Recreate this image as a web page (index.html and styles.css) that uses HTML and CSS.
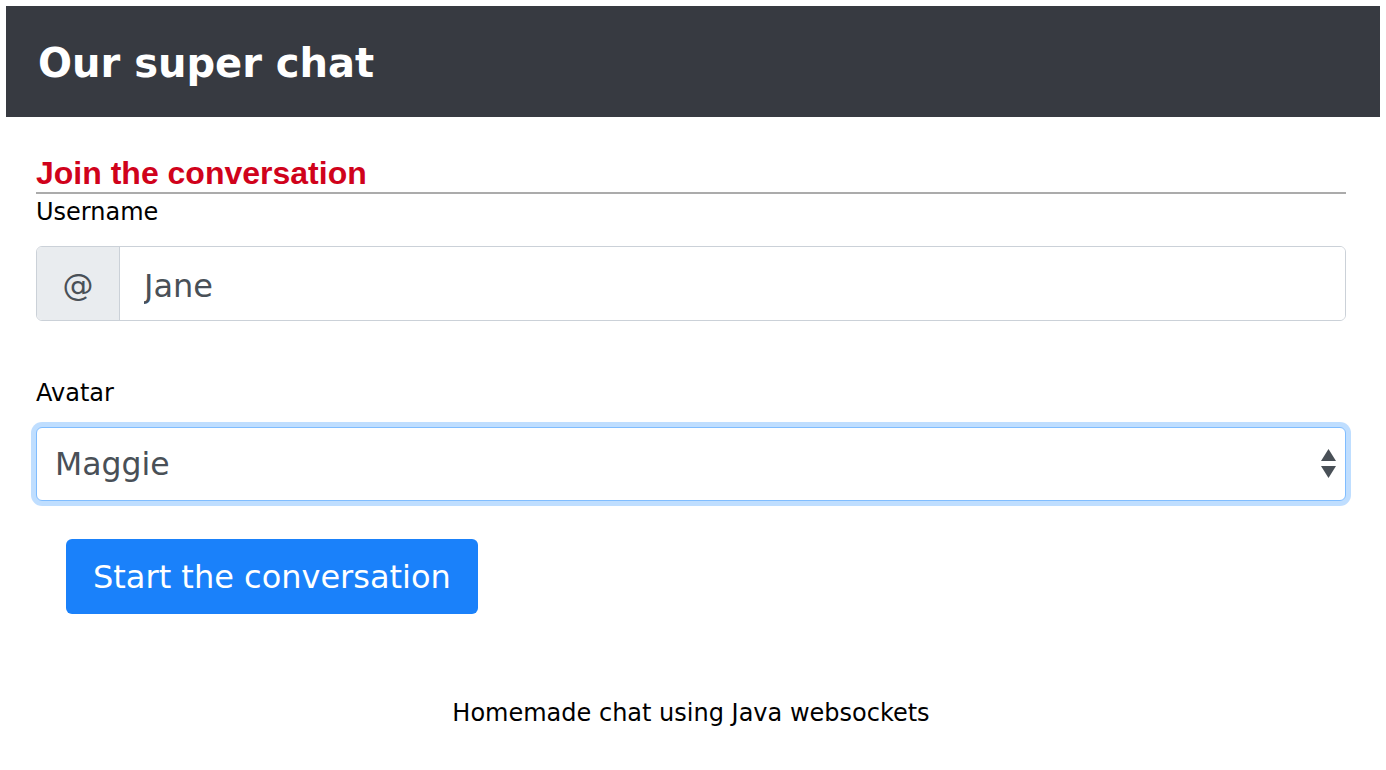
FILE: index.html
```html
<!DOCTYPE html>
<html lang="en">
<head>
<meta charset="utf-8">
<title>Our super chat</title>
<link rel="stylesheet" href="styles.css">
</head>
<body>
<header class="topbar">
  <h1 class="brand">Our super chat</h1>
</header>
<main class="content">
  <h2 class="section-title">Join the conversation</h2>
  <form class="join-form">
    <label class="field-label" for="username">Username</label>
    <div class="input-group">
      <span class="input-prefix">@</span>
      <input class="text-input" id="username" type="text" value="Jane">
    </div>
    <label class="field-label avatar-label" for="avatar">Avatar</label>
    <div class="select-wrap">
      <select class="select-input" id="avatar">
        <option>Maggie</option>
        <option>Homer</option>
        <option>Bart</option>
        <option>Lisa</option>
      </select>
      <svg class="select-arrows" width="15" height="29" viewBox="0 0 15 29" aria-hidden="true">
        <polygon points="7.5,0 15,12 0,12" fill="#495057"/>
        <polygon points="0,17 15,17 7.5,29" fill="#495057"/>
      </svg>
    </div>
    <div class="actions">
      <button class="btn-primary" type="button">Start the conversation</button>
    </div>
  </form>
  <footer class="footer">Homemade chat using Java websockets</footer>
</main>
</body>
</html>
```

FILE: styles.css
```css
html, body {
  background: #ffffff;
}
body {
  margin: 6px;
  font-family: "DejaVu Sans", Verdana, sans-serif;
  color: #000;
}
.topbar {
  background: #373a41;
  height: 111px;
  display: flex;
  align-items: center;
  padding-left: 32px;
}
.brand {
  margin: 0;
  font-family: "DejaVu Sans", Verdana, sans-serif;
  font-weight: bold;
  font-size: 40px;
  line-height: 48px;
  padding-top: 2px;
  color: #ffffff;
}
.content {
  padding: 0 34px 0 30px;
}
.section-title {
  margin: 38px 0 0;
  font-family: "Liberation Sans", Arial, sans-serif;
  font-weight: bold;
  font-size: 32px;
  line-height: 37px;
  color: #d0021b;
  border-bottom: 2px solid #ababab;
}
.join-form {
  display: flex;
  flex-direction: column;
}
.field-label {
  display: block;
  margin-top: 4px;
  font-size: 24px;
  line-height: 28px;
  color: #000;
}
.avatar-label {
  margin-top: 58px;
}
.input-group {
  display: flex;
  margin-top: 20px;
  height: 75px;
  box-sizing: border-box;
  border: 1.5px solid #cbd1d8;
  border-radius: 6px;
  overflow: hidden;
}
.input-prefix {
  width: 82px;
  flex: none;
  display: flex;
  align-items: center;
  justify-content: center;
  background: #e9ecef;
  border-right: 1.5px solid #cbd1d8;
  font-size: 31px;
  color: #495057;
  padding-top: 2px;
}
.text-input {
  flex: 1;
  border: 0;
  outline: none;
  padding: 4px 0 0 24px;
  font-family: "DejaVu Sans", Verdana, sans-serif;
  font-size: 32px;
  color: #495057;
  background: #fff;
}
.select-wrap {
  position: relative;
  margin-top: 20px;
}
.select-input {
  display: block;
  width: 100%;
  height: 74px;
  box-sizing: border-box;
  -webkit-appearance: none;
  appearance: none;
  border: 1.5px solid #80bdff;
  border-radius: 6px;
  box-shadow: 0 0 0 5px rgba(0, 123, 255, 0.25);
  outline: none;
  background: #fff;
  padding: 0 0 0 18px;
  font-family: "DejaVu Sans", Verdana, sans-serif;
  font-size: 31.5px;
  color: #495057;
}
.select-arrows {
  position: absolute;
  right: 10px;
  top: 22px;
  pointer-events: none;
}
.actions {
  margin-top: 38px;
  padding-left: 30px;
}
.btn-primary {
  height: 75px;
  padding: 0 27px;
  border: 0;
  border-radius: 6px;
  background: #1a81fa;
  color: #fff;
  font-family: "DejaVu Sans", Verdana, sans-serif;
  font-size: 32px;
  cursor: pointer;
}
.footer {
  margin-top: 85px;
  text-align: center;
  font-size: 24px;
  line-height: 28px;
  padding-left: 0;
}
```
